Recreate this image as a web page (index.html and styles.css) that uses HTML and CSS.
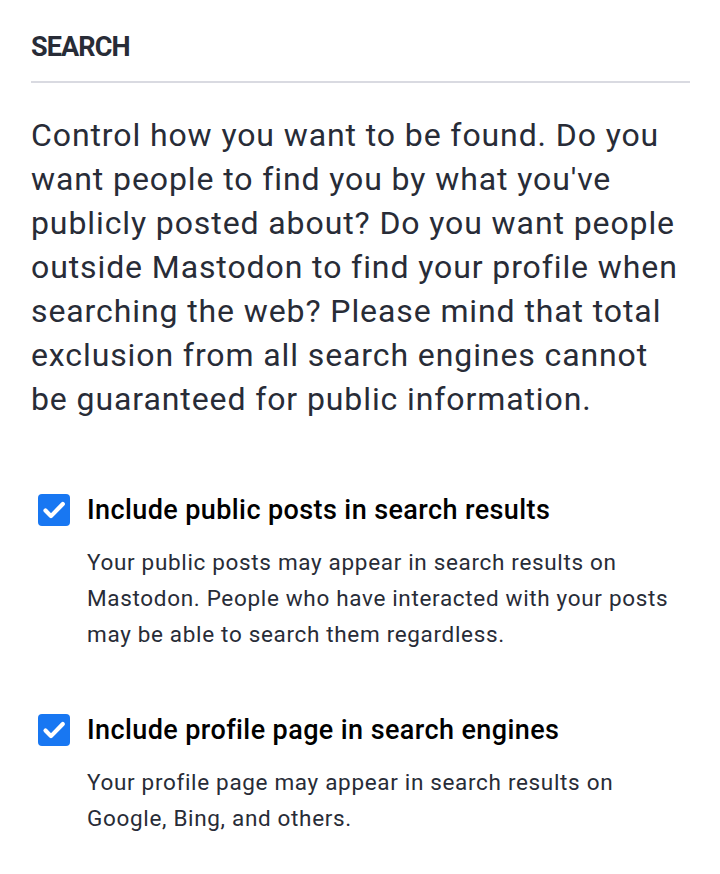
FILE: index.html
```html
<!DOCTYPE html>
<html lang="en">
<head>
<meta charset="utf-8">
<link rel="stylesheet" href="styles.css">
</head>
<body>
<section class="settings">
  <h3 class="heading">SEARCH</h3>
  <p class="intro">Control how you want to be found. Do you want people to find you by what you've publicly posted about? Do you want people outside Mastodon to find your profile when searching the web? Please mind that total exclusion from all search engines cannot be guaranteed for public information.</p>
  <div class="option">
    <div class="row">
      <span class="check"><svg viewBox="0 0 32 32" width="32" height="32"><rect width="32" height="32" rx="4" fill="#1877f2"/><path d="M7.5 16.5l5.5 5.6L24.8 10" fill="none" stroke="#fff" stroke-width="4.2" stroke-linecap="round" stroke-linejoin="round"/></svg></span>
      <span class="label">Include public posts in search results</span>
    </div>
    <p class="hint">Your public posts may appear in search results on Mastodon. People who have interacted with your posts may be able to search them regardless.</p>
  </div>
  <div class="option second">
    <div class="row">
      <span class="check"><svg viewBox="0 0 32 32" width="32" height="32"><rect width="32" height="32" rx="4" fill="#1877f2"/><path d="M7.5 16.5l5.5 5.6L24.8 10" fill="none" stroke="#fff" stroke-width="4.2" stroke-linecap="round" stroke-linejoin="round"/></svg></span>
      <span class="label">Include profile page in search engines</span>
    </div>
    <p class="hint">Your profile page may appear in search results on Google, Bing, and others.</p>
  </div>
</section>
</body>
</html>
```
FILE: styles.css
```css
html, body {
  margin: 0;
  padding: 0;
  background: #fff;
}
body {
  font-family: Roboto, "Noto Sans", sans-serif;
  color: #282c37;
}
.settings {
  padding: 30px 30px 0 31px;
}
.heading {
  margin: 0;
  font-size: 27px;
  font-weight: 700;
  letter-spacing: -0.9px;
  line-height: 34px;
  color: #282c37;
  padding-bottom: 17px;
  border-bottom: 2px solid #d9dae1;
}
.intro {
  margin: 30px 0 0;
  font-size: 32px;
  letter-spacing: 0.9px;
  line-height: 44px;
  color: #282c37;
}
.option {
  margin-top: 71px;
}
.option.second {
  margin-top: 60px;
}
.row {
  display: flex;
  align-items: center;
  gap: 17px;
  padding-left: 7px;
}
.check {
  display: flex;
  width: 32px;
  height: 32px;
}
.label {
  font-size: 27px;
  font-weight: 500;
  letter-spacing: 0.4px;
  color: #000;
  line-height: 36px;
}
.hint {
  margin: 16px 0 0 56px;
  font-size: 22.5px;
  letter-spacing: 0.67px;
  line-height: 36px;
  color: #282c37;
}
```
